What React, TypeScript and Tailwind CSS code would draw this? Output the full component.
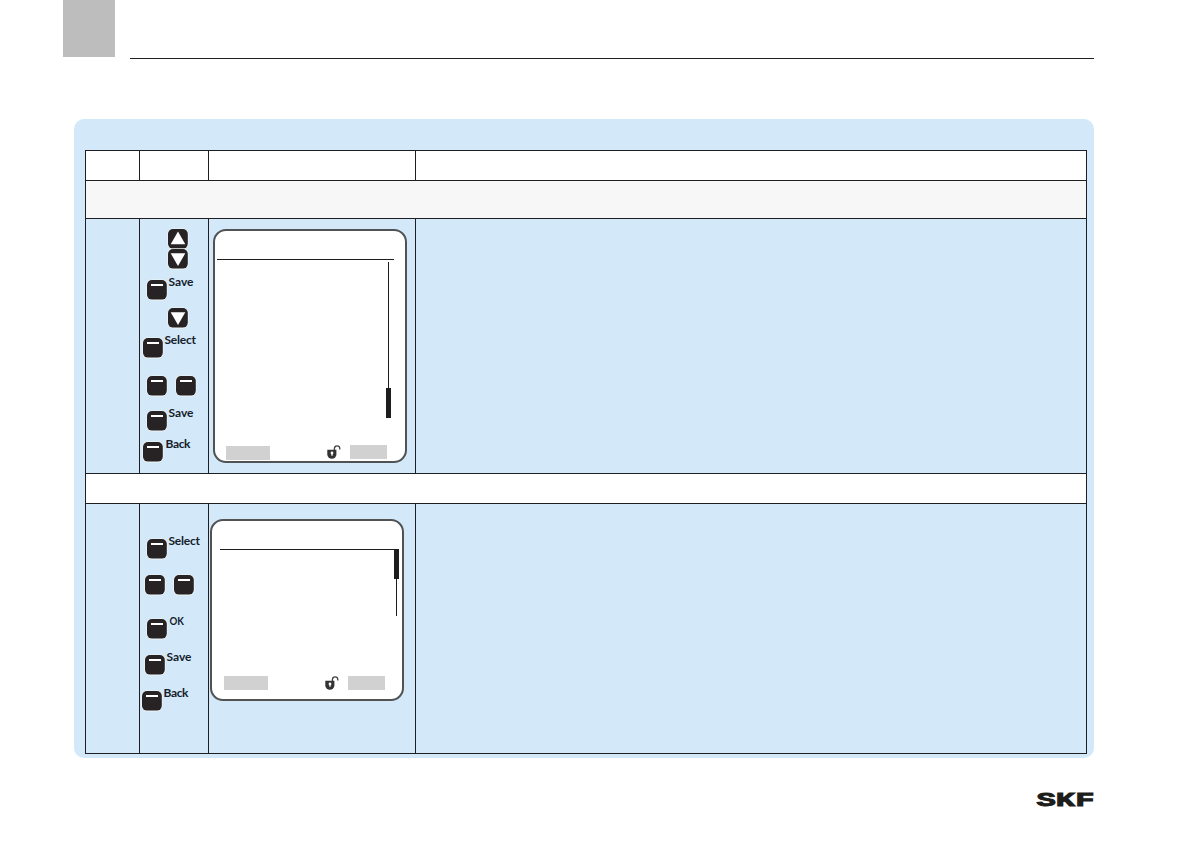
import React from 'react';

interface KeyRow {
  type: 'up' | 'down' | 'soft' | 'pair',
  label?: string,
  row: string, // offsets of the row inside the keys column
  labelClass?: string,
}

const settingKeys: KeyRow[] = [
  { type: 'up', row: 'ml-[28px] mt-[10px]' },
  { type: 'down', row: 'ml-[28px] mt-0' },
  { type: 'soft', label: 'Save', row: 'ml-[7px] mt-[11px]', labelClass: 'w-[26px] ml-px' },
  { type: 'down', row: 'ml-[28px] mt-[8px]' },
  { type: 'soft', label: 'Select', row: 'ml-[3px] mt-[10px]', labelClass: 'w-[32px] ml-px' },
  { type: 'pair', row: 'ml-[7px] mt-[18px]' },
  { type: 'soft', label: 'Save', row: 'ml-[7px] mt-[15px]', labelClass: 'w-[26px] ml-px' },
  { type: 'soft', label: 'Back', row: 'ml-[3px] mt-[11px]', labelClass: 'w-[26px] ml-[2px]' },
];

const confirmKeys: KeyRow[] = [
  { type: 'soft', label: 'Select', row: 'ml-[7px] mt-[35px]', labelClass: 'w-[32px] ml-px' },
  { type: 'pair', row: 'ml-[5px] mt-[16px]' },
  { type: 'soft', label: 'OK', row: 'ml-[7px] mt-[24px]', labelClass: 'w-[16px] ml-[2px]' },
  { type: 'soft', label: 'Save', row: 'ml-[5px] mt-[16px]', labelClass: 'w-[26px] ml-px' },
  { type: 'soft', label: 'Back', row: 'ml-[2px] mt-[16px]', labelClass: 'w-[26px] ml-px' },
];

const labelWidths: Record<string, number> = { Save: 25, Select: 31.5, Back: 25, OK: 14.5 };

const KeyIcon = ({ type }: { type: 'up' | 'down' | 'soft' }) => (
  <svg width="20" height="20" viewBox="0 0 20 20" className="block shrink-0 overflow-visible">
    <rect x="-0.6" y="-0.6" width="21" height="21" rx="5.5" fill="#f3f5f6" />
    <rect x="0" y="0" width="19.8" height="19.6" rx="5" fill="#272223" />
    {type === 'up' && <path d="M10 2.6 L17.3 15.3 H2.7 Z" fill="#fff" />}
    {type === 'down' && <path d="M10 17 L17.3 4.3 H2.7 Z" fill="#fff" />}
    {type === 'soft' && <rect x="4" y="4" width="12" height="2" fill="#fff" />}
  </svg>
);

const KeyLabel = ({ text }: { text: string }) => (
  <svg width="34" height="14" className="block overflow-visible">
    <text
      x="0.5"
      y="10"
      textLength={labelWidths[text]}
      lengthAdjust={text === 'OK' ? 'spacingAndGlyphs' : 'spacing'}
      className="font-[Lato,sans-serif] text-[12px] font-bold"
      fill="#15202b"
    >
      {text}
    </text>
  </svg>
);

const Keys = ({ rows }: { rows: KeyRow[] }) => (
  <div className="flex w-[69px] shrink-0 flex-col border-r border-[#1f1f23]">
    {rows.map((key, index) => (
      <div key={index} className={`flex h-5 shrink-0 items-start ${key.row}`}>
        <KeyIcon type={key.type === 'pair' ? 'soft' : key.type} />
        {key.type === 'pair' && (
          <div className="ml-[9px]"><KeyIcon type="soft" /></div>
        )}
        {key.label && (
          <div className={`-mt-1 ${key.labelClass}`}><KeyLabel text={key.label} /></div>
        )}
      </div>
    ))}
  </div>
);

const OpenLock = () => (
  <svg width="14" height="14" viewBox="0 0 14 14" className="block">
    <path d="M7.4 6 V3.6 A2.7 2.7 0 0 1 12.8 3.6 V4.6" fill="none" stroke="#444" strokeWidth="1.3" />
    <path d="M0.3 4.8 H9.4 V9.5 A4.4 4 0 0 1 0.3 9.5 Z" fill="#333" />
    <circle cx="5" cy="8" r="1.4" fill="#fff" />
    <rect x="4.4" y="8" width="1.2" height="2.8" fill="#fff" />
  </svg>
);

const App = () => {
  return (
    <div className="h-[842px] w-[1190px] overflow-hidden bg-white">
      <header className="flex h-[59px] items-end">
        <div className="ml-[63px] mb-[2px] h-[57px] w-[52px] bg-[#bdbdbd]" />
        <div className="ml-[15px] h-px w-[964px] bg-[#231f20]" />
      </header>

      <main className="ml-[74px] mt-[60px] h-[639px] w-[1020px] rounded-[10px] bg-[#d3e9f9] pl-[11px] pt-[31px]">
        <div className="w-[1002px] border border-[#1f1f23]">
          <div className="flex h-[30px] border-b border-[#1f1f23] bg-white">
            <div className="w-[54px] border-r border-[#1f1f23]" />
            <div className="w-[69px] border-r border-[#1f1f23]" />
            <div className="w-[207px] border-r border-[#1f1f23]" />
          </div>
          <div className="h-[38px] border-b border-[#1f1f23] bg-[#f7f7f7]" />

          <div className="flex h-[255px] border-b border-[#1f1f23]">
            <div className="w-[54px] border-r border-[#1f1f23]" />
            <Keys rows={settingKeys} />
            <div className="w-[207px] border-r border-[#1f1f23] pl-[4px] pt-[10px]">
              <div className="flex h-[234px] w-[194px] flex-col rounded-[13px] border-2 border-[#505254] bg-white">
                <div className="ml-[2px] mt-[28px] h-px w-[177px] shrink-0 bg-[#1d1d1b]" />
                <div className="ml-[171px] mt-[2px] flex w-[5px] flex-col items-center">
                  <div className="h-[126px] w-px bg-[#1d1d1b]" />
                  <div className="h-[30px] w-[5px] bg-[#1d1d1b]" />
                </div>
                <div className="ml-[11px] mt-[27px] flex items-start">
                  <div className="mt-px h-[14px] w-[44px] bg-[#d1d1d1]" />
                  <div className="ml-[57px]"><OpenLock /></div>
                  <div className="ml-[9px] h-[14px] w-[37px] bg-[#d1d1d1]" />
                </div>
              </div>
            </div>
          </div>

          <div className="h-[30px] border-b border-[#1f1f23] bg-white" />

          <div className="flex h-[249px]">
            <div className="w-[54px] border-r border-[#1f1f23]" />
            <Keys rows={confirmKeys} />
            <div className="w-[207px] border-r border-[#1f1f23] pl-px pt-[15px]">
              <div className="flex h-[182px] w-[194px] flex-col rounded-[13px] border-2 border-[#505254] bg-white">
                <div className="ml-[8px] mt-[28px] h-px w-[177px] shrink-0 bg-[#1d1d1b]" />
                <div className="-mt-px ml-[182px] flex w-[5px] flex-col items-center">
                  <div className="h-[30px] w-[5px] bg-[#1d1d1b]" />
                  <div className="h-[37px] w-px bg-[#1d1d1b]" />
                </div>
                <div className="ml-[12px] mt-[60px] flex items-start">
                  <div className="h-[14px] w-[44px] bg-[#d1d1d1]" />
                  <div className="ml-[57px]"><OpenLock /></div>
                  <div className="ml-[9px] h-[14px] w-[37px] bg-[#d1d1d1]" />
                </div>
              </div>
            </div>
          </div>
        </div>
      </main>

      <footer className="flex justify-end pr-[96px] pt-[34px]">
        <svg width="57" height="15" className="block overflow-visible">
          <text
            x="-0.5"
            y="13.5"
            textLength="58"
            lengthAdjust="spacingAndGlyphs"
            className="font-['Liberation_Mono',monospace] text-[20px] font-bold"
            fill="#1d1d1b"
            stroke="#1d1d1b"
            strokeWidth="0.9"
          >
            SKF
          </text>
        </svg>
      </footer>
    </div>
  );
};

export default App;
